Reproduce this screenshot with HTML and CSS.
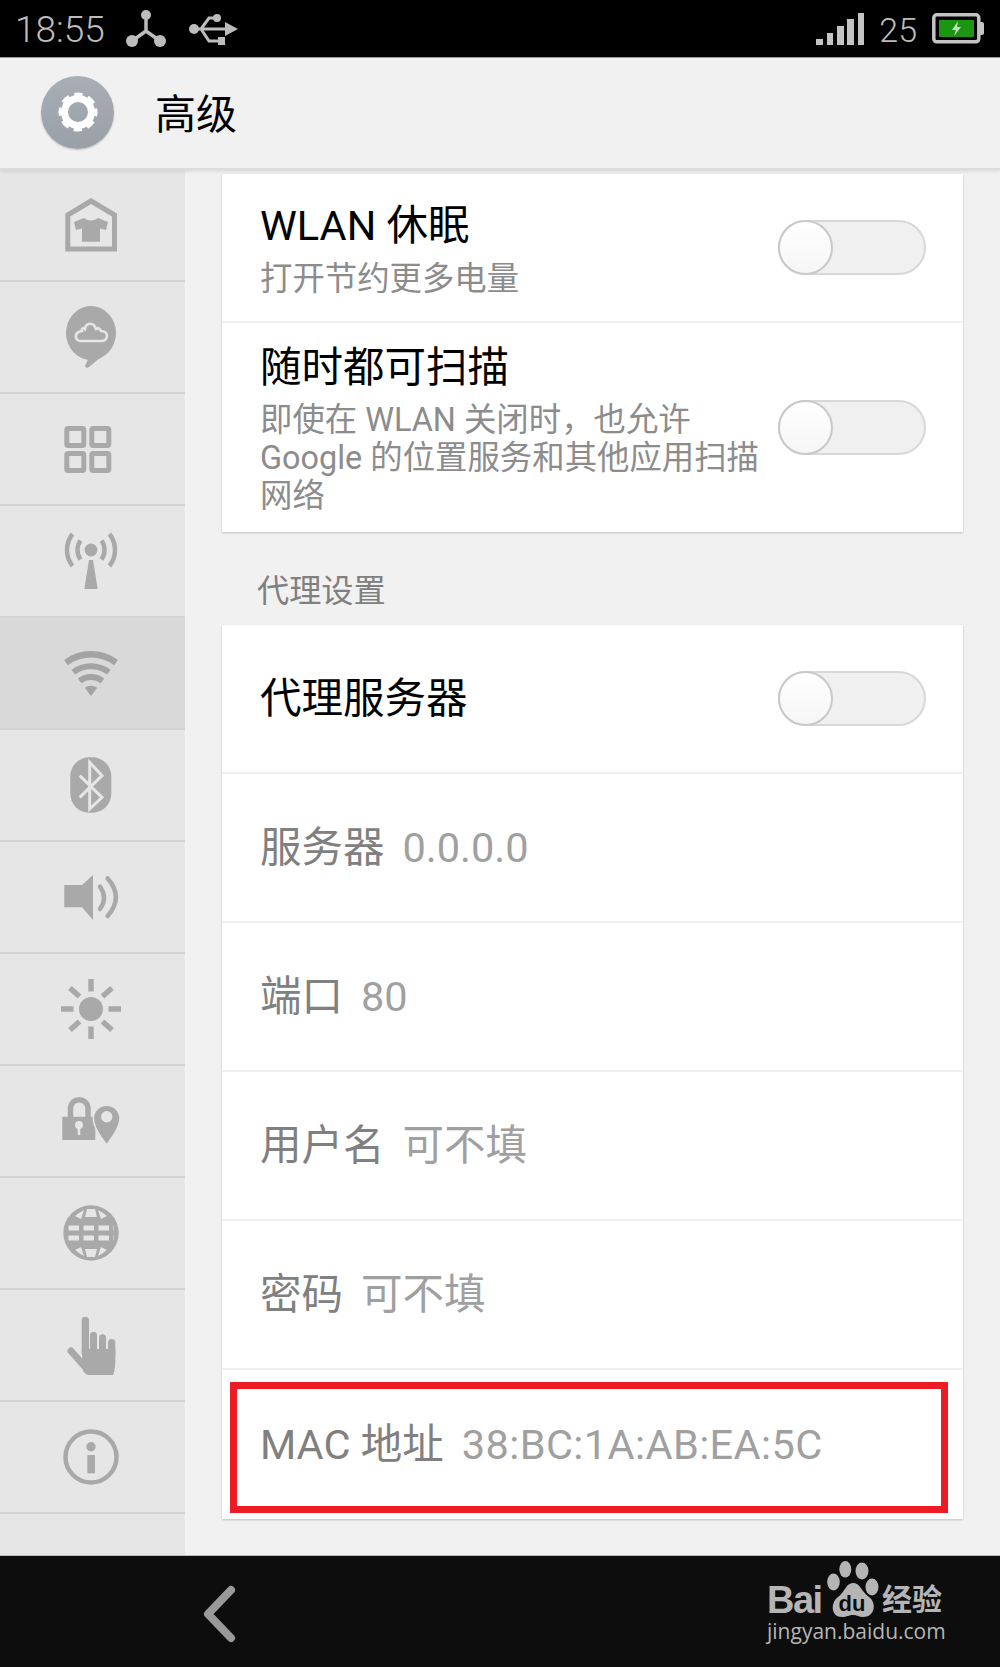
FILE: index.html
```html
<!DOCTYPE html>
<html lang="zh-CN">
<head>
    <meta charset="UTF-8">
    <meta name="viewport" content="width=device-width, initial-scale=1.0">
    <title>高级</title>
    <link rel="stylesheet" href="styles.css">
</head>
<body>
    <div class="status-bar">
        <span class="time">18:55</span>
        <svg class="status-share" width="42" height="38" viewBox="0 0 42 38">
            <path d="M21 6V22L7 32M21 22L35 32" fill="none" stroke="#bcbcbc" stroke-width="3.5"/>
            <circle cx="21" cy="6" r="5" fill="#bcbcbc"/>
            <circle cx="7" cy="32" r="6" fill="#bcbcbc"/>
            <circle cx="35" cy="32" r="6" fill="#bcbcbc"/>
        </svg>
        <svg class="status-usb" width="50" height="34" viewBox="0 0 50 34">
            <circle cx="5" cy="16" r="5" fill="#bcbcbc"/>
            <path d="M5 16H38M12 16L20 5H27M12 16L20 28H30" fill="none" stroke="#bcbcbc" stroke-width="3"/>
            <circle cx="28" cy="5" r="4" fill="#bcbcbc"/>
            <rect x="29" y="24" width="7" height="8" fill="#bcbcbc"/>
            <path d="M36 9L49 16L36 23Z" fill="#bcbcbc"/>
        </svg>
        <div class="signal">
            <span class="bar bar-1"></span>
            <span class="bar bar-2"></span>
            <span class="bar bar-3"></span>
            <span class="bar bar-4"></span>
            <span class="bar bar-5"></span>
        </div>
        <span class="level">25</span>
        <svg class="battery" width="52" height="31" viewBox="0 0 52 31">
            <rect x="1.8" y="1.8" width="45" height="27" rx="3" fill="none" stroke="#c4c4c4" stroke-width="3.5"/>
            <path d="M48 9h2a2 2 0 0 1 2 2v9a2 2 0 0 1-2 2h-2z" fill="#c4c4c4"/>
            <rect x="7" y="7" width="35" height="17" rx="1" fill="#1a9610"/>
            <path d="M26 8L20 17H24L22 23L29 14H25Z" fill="#c8dcc4"/>
        </svg>
    </div>

    <header class="top-bar">
        <div class="gear-badge">
            <svg width="46" height="46" viewBox="0 0 46 46">
                <circle cx="23" cy="23" r="13.5" fill="none" stroke="#fff" stroke-width="7"/>
                <circle cx="23" cy="23" r="17" fill="none" stroke="#fff" stroke-width="5" stroke-dasharray="8 5.35" stroke-dashoffset="4"/>
            </svg>
        </div>
        <h1>高级</h1>
    </header>

    <div class="main">
        <nav class="sidebar">
            <div class="nav-item">
                <svg class="nav-icon" viewBox="0 0 64 64">
                    <path d="M32 8L55.5 22V56H8.8V22Z" fill="none" stroke="#a9a9a9" stroke-width="5"/>
                    <path d="M25 25Q32 30 39 25L49 29L47 37L41 35.5V48.7H23V35.5L17 37L15 29Z" fill="#a9a9a9"/>
                </svg>
            </div>
            <div class="nav-item">
                <svg class="nav-icon" viewBox="0 0 64 64">
                    <ellipse cx="32" cy="28" rx="25" ry="27" fill="#a9a9a9"/>
                    <path d="M31 50L26 61Q27 64 30 62L42 52Z" fill="#a9a9a9"/>
                    <path d="M22 36H42C50 36 50 26 42 26C41 23 39 23 37 24C35 17 27 17 26 24C24 22 22 24 23 26C15 27 15 36 22 36Z" fill="none" stroke="#e6e6e6" stroke-width="2.6"/>
                </svg>
            </div>
            <div class="nav-item">
                <svg class="nav-icon" viewBox="0 0 64 64">
                    <g fill="none" stroke="#a9a9a9" stroke-width="5">
                        <rect x="7.8" y="11.5" width="17" height="17" rx="1.5"/>
                        <rect x="32.8" y="11.5" width="17" height="17" rx="1.5"/>
                        <rect x="7.8" y="36.5" width="17" height="17" rx="1.5"/>
                        <rect x="32.8" y="36.5" width="17" height="17" rx="1.5"/>
                    </g>
                </svg>
            </div>
            <div class="nav-item">
                <svg class="nav-icon" viewBox="0 0 64 64">
                    <circle cx="32" cy="21" r="6.4" fill="#a9a9a9"/>
                    <path d="M30 31H34L38.7 60H25.3Z" fill="#a9a9a9"/>
                    <g fill="none" stroke="#a9a9a9" stroke-width="4.5">
                        <path d="M13.5 5A26 26 0 0 0 13.5 37"/>
                        <path d="M21.5 11.5A16.5 16.5 0 0 0 21.5 30.5"/>
                        <path d="M50.5 5A26 26 0 0 1 50.5 37"/>
                        <path d="M42.5 11.5A16.5 16.5 0 0 1 42.5 30.5"/>
                    </g>
                </svg>
            </div>
            <div class="nav-item selected">
                <svg class="nav-icon" viewBox="0 0 64 64">
                    <g fill="none" stroke="#a3a3a3">
                        <path d="M7 21.6A41.7 41.7 0 0 1 57 21.6" stroke-width="6.5"/>
                        <path d="M14.2 31.2A29.7 29.7 0 0 1 49.8 31.2" stroke-width="6"/>
                        <path d="M20.6 39.8A19 19 0 0 1 43.4 39.8" stroke-width="6"/>
                    </g>
                    <path d="M32 55L25.8 46.8A10.3 10.3 0 0 1 38.2 46.8Z" fill="#a3a3a3"/>
                </svg>
            </div>
            <div class="nav-item">
                <svg class="nav-icon" viewBox="0 0 64 64">
                    <rect x="11.3" y="4.3" width="41" height="55.4" rx="19" fill="#a9a9a9"/>
                    <path d="M20.7 22.7L43 44.3L30.7 56V9.3L43 22.7L20.7 44.3" fill="none" stroke="#e6e6e6" stroke-width="3"/>
                </svg>
            </div>
            <div class="nav-item">
                <svg class="nav-icon" viewBox="0 0 64 64">
                    <path d="M5.3 20H23L34 10V55L23 42.3H5.3Z" fill="#a9a9a9"/>
                    <g fill="none" stroke="#a9a9a9" stroke-width="4.5" stroke-linecap="round">
                        <path d="M41 21.5Q49 33 41 44"/>
                        <path d="M48.7 13.5Q65 32 48.7 51"/>
                    </g>
                </svg>
            </div>
            <div class="nav-item">
                <svg class="nav-icon" viewBox="0 0 64 64">
                    <circle cx="32" cy="32" r="12" fill="#a9a9a9"/>
                    <g stroke="#a9a9a9" stroke-width="5.4">
                        <path d="M32 2V14.5M32 49.5V62M2 32H14.5M49.5 32H62"/>
                        <path d="M11 11L20.5 19.5M43.5 44.5L53 53M53 11L43.5 19.5M20.5 44.5L11 53"/>
                    </g>
                </svg>
            </div>
            <div class="nav-item">
                <svg class="nav-icon" viewBox="0 0 64 64">
                    <path d="M3.3 27.7H36.3V51H3.3Z" fill="#a9a9a9"/>
                    <path d="M11.5 28V18.5A8.8 8.8 0 0 1 29 18.5V28" fill="none" stroke="#a9a9a9" stroke-width="5.5"/>
                    <circle cx="20" cy="36" r="4" fill="#e6e6e6"/>
                    <rect x="18.7" y="37" width="2.6" height="9" fill="#e6e6e6"/>
                    <path d="M47.7 56C41 47 34.3 38 34.3 28.5A13.4 13.4 0 0 1 61 28.5C61 38 54 47 47.7 56Z" fill="#a9a9a9" stroke="#e6e6e6" stroke-width="1.5"/>
                    <circle cx="47.7" cy="27.7" r="5.7" fill="#e6e6e6"/>
                </svg>
            </div>
            <div class="nav-item">
                <svg class="nav-icon" viewBox="0 0 64 64">
                    <circle cx="32" cy="32" r="27.7" fill="#a9a9a9"/>
                    <g fill="none" stroke="#e6e6e6" stroke-width="5" stroke-dasharray="10.5 4.5">
                        <path d="M9.5 27H55"/>
                        <path d="M9.5 37H55"/>
                    </g>
                    <path d="M16 15Q21 11 25 9L22 18ZM48 15Q43 11 39 9L42 18ZM16 49Q21 53 25 55L22 46ZM48 49Q43 53 39 55L42 46ZM28 8H36L38 16H26ZM28 56H36L38 48H26Z" fill="#e6e6e6"/>
                </svg>
            </div>
            <div class="nav-item">
                <svg class="nav-icon" viewBox="0 0 64 64">
                    <g fill="#a9a9a9">
                        <rect x="22.7" y="3.7" width="7.3" height="40" rx="3.6"/>
                        <rect x="31" y="18.7" width="7" height="25" rx="3.5"/>
                        <rect x="40" y="21.3" width="7" height="24" rx="3.5"/>
                        <rect x="49" y="26" width="7.3" height="20" rx="3.5"/>
                        <path d="M22.7 36H56.3V50Q55.8 58 54 62H30Q27 62 24 58Z"/>
                    </g>
                    <path d="M12 38L27 55" fill="none" stroke="#a9a9a9" stroke-width="7" stroke-linecap="round"/>
                </svg>
            </div>
            <div class="nav-item">
                <svg class="nav-icon" viewBox="0 0 64 64">
                    <circle cx="32" cy="32" r="25.5" fill="none" stroke="#a9a9a9" stroke-width="4.5"/>
                    <circle cx="32" cy="21.7" r="4.7" fill="#a9a9a9"/>
                    <rect x="28.3" y="30" width="7.7" height="18.3" fill="#a9a9a9"/>
                </svg>
            </div>
        </nav>

        <div class="content">
            <div class="card">
                <div class="row row-first">
                    <div class="row-text">
                        <div class="row-title">WLAN 休眠</div>
                        <div class="row-sub">打开节约更多电量</div>
                    </div>
                    <div class="toggle"><span class="knob"></span></div>
                </div>
                <div class="row row-tall">
                    <div class="row-text">
                        <div class="row-title">随时都可扫描</div>
                        <div class="row-sub">即使在 WLAN 关闭时，也允许<br>Google 的位置服务和其他应用扫描<br>网络</div>
                    </div>
                    <div class="toggle"><span class="knob"></span></div>
                </div>
            </div>

            <div class="section-label">代理设置</div>

            <div class="card">
                <div class="row row-single">
                    <div class="row-title">代理服务器</div>
                    <div class="toggle"><span class="knob"></span></div>
                </div>
                <div class="row row-single field"><span class="field-name">服务器</span><span class="field-value">0.0.0.0</span></div>
                <div class="row row-single field"><span class="field-name">端口</span><span class="field-value">80</span></div>
                <div class="row row-single field"><span class="field-name">用户名</span><span class="field-value">可不填</span></div>
                <div class="row row-single field"><span class="field-name">密码</span><span class="field-value">可不填</span></div>
                <div class="row row-single field mac-row">
                    <span class="field-name">MAC 地址</span><span class="field-value mac-value">38:BC:1A:AB:EA:5C</span>
                    <div class="red-box"></div>
                </div>
            </div>
        </div>
    </div>

    <footer class="nav-bar">
        <svg class="back" width="40" height="60" viewBox="0 0 40 60">
            <path d="M29 5L6 29L29 53" fill="none" stroke="#999" stroke-width="8" stroke-linecap="round" stroke-linejoin="round"/>
        </svg>
        <div class="baidu">
            <div class="baidu-top">
                <span class="baidu-bai">Bai</span>
                <svg class="baidu-paw" width="52" height="56" viewBox="0 0 52 56">
                    <g fill="#b5b5b5">
                        <ellipse cx="18.3" cy="8.3" rx="6" ry="8.3"/>
                        <ellipse cx="35" cy="10" rx="6.5" ry="8.5"/>
                        <ellipse cx="6.5" cy="21" rx="6.3" ry="8.5"/>
                        <ellipse cx="45" cy="26" rx="6.5" ry="8.5"/>
                        <path d="M26 22C33 22 34 30 42 36C50 42 48 56 36 56C32 56 30 54 26 54C22 54 20 56 15 56C4 56 3 42 11 36C18 31 19 22 26 22Z"/>
                    </g>
                    <text class="baidu-du" x="25" y="50">du</text>
                </svg>
                <span class="baidu-jy">经验</span>
            </div>
            <div class="baidu-url">jingyan.baidu.com</div>
        </div>
    </footer>
</body>
</html>
```

FILE: styles.css
```css
* {
    box-sizing: border-box;
}

html, body {
    margin: 0;
    padding: 0;
}

body {
    width: 1000px;
    height: 1667px;
    overflow: hidden;
    display: flex;
    flex-direction: column;
    font-family: Roboto, "Noto Sans CJK SC", sans-serif;
    background-color: #f1f1f1;
}

/* barra de estado */
.status-bar {
    height: 58px;
    flex: none;
    display: flex;
    align-items: flex-start;
    background-color: #000;
    border-bottom: 1px solid #999;
    color: #bcbcbc;
}

.time {
    margin: 9px 0 0 15px;
    font-size: 37px;
    line-height: 42px;
    font-weight: 300;
}

.status-share {
    margin: 9px 0 0 20px;
}

.status-usb {
    margin: 13px 0 0 22px;
}

.signal {
    margin: 13px 0 0 auto;
    height: 32px;
    display: flex;
    align-items: flex-end;
    gap: 3.6px;
}

.bar {
    width: 6.7px;
    background-color: #c4c4c4;
}

.bar-1 { height: 6px; }
.bar-2 { height: 12px; }
.bar-3 { height: 19px; }
.bar-4 { height: 26px; }
.bar-5 { height: 32px; }

.level {
    margin: 10px 0 0 15px;
    font-size: 34px;
    line-height: 40px;
    font-weight: 300;
}

.battery {
    margin: 13px 16px 0 15px;
}

/* cabecera */
.top-bar {
    height: 112px;
    flex: none;
    display: flex;
    align-items: center;
    padding: 0 0 2px 41px;
    background-color: #f1f1f1;
    border-bottom: 2px solid #dcdcdc;
    box-shadow: 0 2px 3px rgba(0, 0, 0, 0.08);
    position: relative;
    z-index: 2;
}

.gear-badge {
    width: 73px;
    height: 73px;
    display: flex;
    align-items: center;
    justify-content: center;
    border-radius: 50%;
    background: linear-gradient(#a8aeb5, #99a0a8);
    box-shadow: 0 1px 2px rgba(0, 0, 0, 0.2);
}

h1 {
    margin: 0 0 2px 41px;
    font-size: 41px;
    font-weight: 400;
    color: #000;
}

/* cuerpo */
.main {
    flex: 1;
    display: flex;
    min-height: 0;
}

.sidebar {
    width: 185px;
    flex: none;
    background-color: #e6e6e6;
}

.nav-item {
    height: 112px;
    display: flex;
    align-items: center;
    justify-content: center;
    padding-right: 4px;
    border-bottom: 2px solid #d4d4d4;
}

.nav-item.selected {
    background-color: #d9d9d9;
}

.nav-icon {
    width: 64px;
    height: 64px;
}

.content {
    flex: 1;
    padding: 4px 37px 0;
}

.card {
    background-color: #fff;
    box-shadow: 0 1px 2px rgba(0, 0, 0, 0.2);
}

.row {
    display: flex;
    align-items: center;
    justify-content: space-between;
    padding-left: 38px;
    padding-right: 37px;
    border-bottom: 2px solid #f0f0f0;
}

.row:last-child {
    border-bottom: none;
}

.row-first {
    height: 149px;
}

.row-first .row-text {
    margin-top: 5px;
}

.row-first .row-sub {
    margin-top: 10px;
}

.row-tall {
    height: 209px;
}

.row-tall .row-text {
    margin-top: 3px;
}

.row-single {
    height: 149px;
}

.row-title {
    font-size: 41.5px;
    line-height: 48px;
    color: #000;
}

.row-sub {
    margin-top: 9px;
    font-size: 32.4px;
    line-height: 38px;
    color: #8c8c8c;
}

.toggle {
    width: 148px;
    height: 55px;
    flex: none;
    border: 2px solid #d8d8d8;
    border-radius: 28px;
    background-color: #f0f0f0;
}

.knob {
    display: block;
    width: 55px;
    height: 55px;
    margin: -2px 0 0 -2px;
    border: 2px solid #c9c9c9;
    border-radius: 50%;
    background: linear-gradient(#fff, #f6f6f6);
}

.section-label {
    height: 93px;
    padding: 38px 0 0 35px;
    font-size: 32.2px;
    line-height: 42px;
    color: #808080;
}

.field {
    justify-content: flex-start;
    gap: 18px;
    font-size: 41.5px;
    line-height: 48px;
}

.field-name {
    color: #808080;
}

.field-value {
    color: #a0a0a0;
}

.mac-value {
    letter-spacing: 0.4px;
}

.mac-row {
    position: relative;
}

/* recuadro rojo de la captura */
.red-box {
    position: absolute;
    top: 12px;
    left: 8px;
    right: 15px;
    bottom: 6px;
    border: 7px solid #ed1c24;
}

/* barra inferior */
.nav-bar {
    height: 112px;
    flex: none;
    display: flex;
    align-items: flex-start;
    padding: 5px 55px 0 202px;
    background-color: #0d0d0d;
    border-top: 1px solid #bbb;
}

.back {
    margin-top: 24px;
}

.baidu {
    margin-left: auto;
    width: 178px;
    color: #b5b5b5;
}

.baidu-top {
    display: flex;
    align-items: flex-end;
    height: 56px;
}

.baidu-bai {
    width: 60px;
    font-family: "Liberation Sans", sans-serif;
    font-size: 38px;
    line-height: 34px;
    font-weight: 700;
    letter-spacing: -1.5px;
}

.baidu-du {
    font-family: "Liberation Sans", sans-serif;
    font-size: 22px;
    font-weight: 700;
    text-anchor: middle;
    fill: #0d0d0d;
}

.baidu-paw {
    flex: none;
}

.baidu-jy {
    margin-left: 3px;
    font-size: 30px;
    line-height: 34px;
    font-weight: 700;
    white-space: nowrap;
}

.baidu-url {
    margin-top: 1px;
    font-family: "Open Sans", sans-serif;
    font-size: 21px;
    line-height: 26px;
    white-space: nowrap;
}
```
